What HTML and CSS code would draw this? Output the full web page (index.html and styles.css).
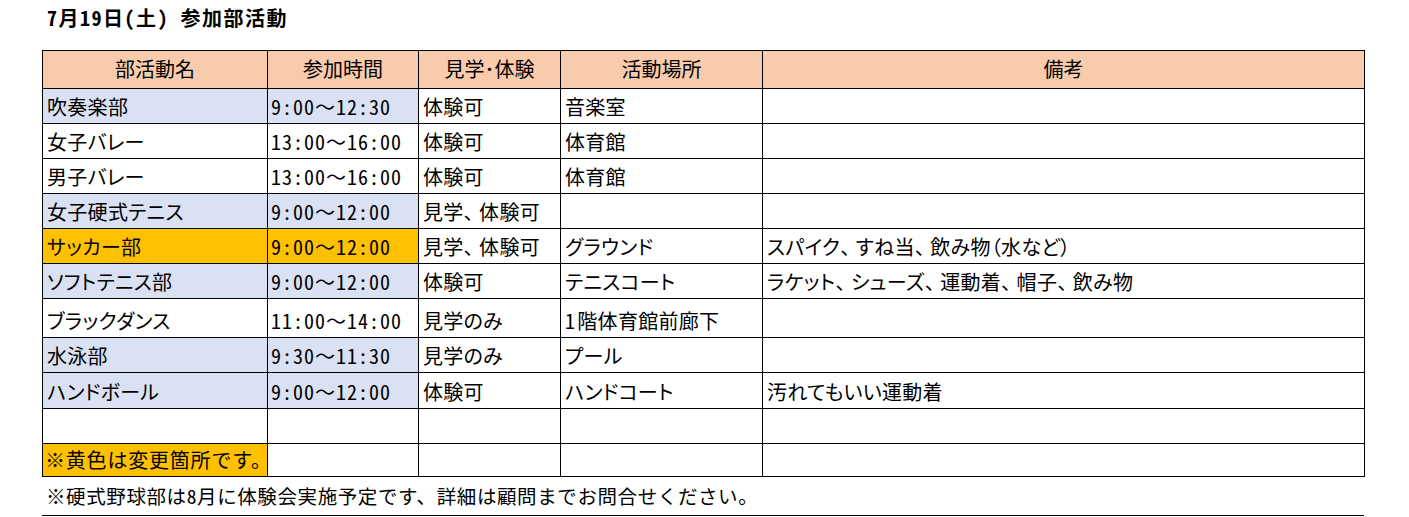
FILE: index.html
```html
<!DOCTYPE html>
<html lang="ja">
<head>
<meta charset="utf-8">
<title>7月19日(土) 参加部活動</title>
<link rel="stylesheet" href="styles.css">
</head>
<body>
<div class="page">
  <h1 class="title">7月19日(土)　参加部活動</h1>
  <table class="sheet">
    <colgroup>
      <col class="c1"><col class="c2"><col class="c3"><col class="c4"><col class="c5">
    </colgroup>
    <thead>
      <tr class="h38">
        <th>部活動名</th><th>参加時間</th><th>見学･体験</th><th>活動場所</th><th>備考</th>
      </tr>
    </thead>
    <tbody>
      <tr class="h35">
        <td class="blue">吹奏楽部</td><td class="blue time">9:00<span class="fw">〜</span>12:30</td><td>体験可</td><td>音楽室</td><td></td>
      </tr>
      <tr class="h35">
        <td>女子バレー</td><td class="time">13:00<span class="fw">〜</span>16:00</td><td>体験可</td><td>体育館</td><td></td>
      </tr>
      <tr class="h35">
        <td>男子バレー</td><td class="time">13:00<span class="fw">〜</span>16:00</td><td>体験可</td><td>体育館</td><td></td>
      </tr>
      <tr class="h35">
        <td class="blue">女子硬式テニス</td><td class="blue time">9:00<span class="fw">〜</span>12:00</td><td>見学<span class="comma">、</span>体験可</td><td></td><td></td>
      </tr>
      <tr class="h35">
        <td class="yellow">サッカー部</td><td class="yellow time">9:00<span class="fw">〜</span>12:00</td><td>見学<span class="comma">、</span>体験可</td><td>グラウンド</td><td>スパイク<span class="comma">、</span>すね当<span class="comma">、</span>飲み物（水など）</td>
      </tr>
      <tr class="h35">
        <td class="blue">ソフトテニス部</td><td class="blue time">9:00<span class="fw">〜</span>12:00</td><td>体験可</td><td>テニスコート</td><td>ラケット<span class="comma">、</span>シューズ<span class="comma">、</span>運動着<span class="comma">、</span>帽子<span class="comma">、</span>飲み物</td>
      </tr>
      <tr class="h39">
        <td>ブラックダンス</td><td class="time">11:00<span class="fw">〜</span>14:00</td><td>見学のみ</td><td><span class="hw">1</span>階体育館前廊下</td><td></td>
      </tr>
      <tr class="h35">
        <td class="blue">水泳部</td><td class="blue time">9:30<span class="fw">〜</span>11:30</td><td>見学のみ</td><td>プール</td><td></td>
      </tr>
      <tr class="h36">
        <td class="blue">ハンドボール</td><td class="blue time">9:00<span class="fw">〜</span>12:00</td><td>体験可</td><td>ハンドコート</td><td>汚れてもいい運動着</td>
      </tr>
      <tr class="h35">
        <td></td><td></td><td></td><td></td><td></td>
      </tr>
      <tr class="h33">
        <td class="yellow mono">※黄色は変更箇所です。</td><td></td><td></td><td></td><td></td>
      </tr>
    </tbody>
  </table>
  <p class="footnote">※硬式野球部は8月に体験会実施予定です、詳細は顧問までお問合せください。</p>
</div>
</body>
</html>
```

FILE: styles.css
```css
html, body {
  margin: 0;
  padding: 0;
  background: #ffffff;
}

body {
  font-family: "Noto Sans CJK JP", "Noto Sans", sans-serif;
  color: #000000;
}

.page {
  padding: 0 0 0 42px;
  width: 1322px;
}

.title {
  margin: 0;
  padding: 6px 0 0 5px;
  height: 50px;
  box-sizing: border-box;
  font-size: 20px;
  font-weight: 700;
  line-height: 24px;
  letter-spacing: 1.5px;
  font-feature-settings: "hwid";
}

.sheet {
  border-collapse: collapse;
  table-layout: fixed;
  width: 1322px;
  font-size: 20px;
  font-feature-settings: "palt";
}

.c1 { width: 225px; }
.c2 { width: 151px; }
.c3 { width: 142px; }
.c4 { width: 202px; }
.c5 { width: 602px; }

.sheet th,
.sheet td {
  border: 1px solid #000000;
  padding: 0 3px 4px 4px;
  line-height: 24px;
  white-space: nowrap;
  overflow: hidden;
  vertical-align: bottom;
  text-align: left;
  font-weight: 400;
  letter-spacing: 0.3px;
}

.sheet th {
  background: #f8cbad;
  text-align: center;
  vertical-align: middle;
  padding: 0 3px 2px 3px;
  letter-spacing: 0;
}

.h38 { height: 38px; }
.h35 { height: 35px; }
.h39 { height: 39px; }
.h36 { height: 36px; }
.h33 { height: 33px; }

.sheet td.blue { background: #d9e1f2; }
.sheet td.yellow { background: #ffc000; }

.sheet td.time {
  font-feature-settings: "hwid";
  letter-spacing: 1px;
  padding-left: 3px;
}

.fw {
  font-feature-settings: normal;
}

.comma {
  font-feature-settings: normal;
  letter-spacing: -4.5px;
}

.hw {
  font-feature-settings: "hwid";
  margin-right: 2px;
}

.sheet td.mono {
  font-feature-settings: normal;
  letter-spacing: 0.8px;
  padding: 0 0 4px 2px;
  overflow: visible;
}

.footnote {
  margin: 0;
  height: 39px;
  box-sizing: border-box;
  padding: 7px 0 0 4px;
  border-bottom: 1px solid #000000;
  font-size: 19.5px;
  line-height: 24px;
  letter-spacing: 0.6px;
  font-feature-settings: "hwid";
}
```
